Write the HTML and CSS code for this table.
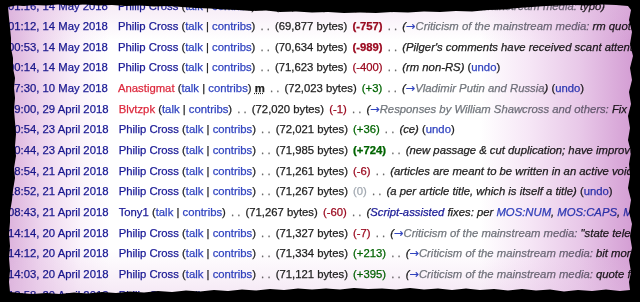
FILE: index.html
```html
<!DOCTYPE html>
<html>
<head>
  <title>Revision history</title>
  <link rel="stylesheet" href="styles.css">
</head>
<body>
  <div class="paper">
    <ul class="history">
      <li><a class="date">01:16, 14 May 2018</a> <span class="user"><a class="visited">Philip Cross</a> <span class="tools">(<a>talk</a> | <a>contribs</a>)</span></span> <span class="sep">. .</span> <span class="bytes">(69,870 bytes)</span> <span class="neg">(-7)</span> <span class="sep">. .</span> <span class="comment">(<span class="auto"><a class="arrow">→</a>Criticism of the mainstream media:</span> typo)</span></li>
      <li><a class="date">01:12, 14 May 2018</a> <span class="user"><a class="visited">Philip Cross</a> <span class="tools">(<a>talk</a> | <a>contribs</a>)</span></span> <span class="sep">. .</span> <span class="bytes">(69,877 bytes)</span> <span class="neg big">(-757)</span> <span class="sep">. .</span> <span class="comment">(<span class="auto"><a class="arrow">→</a>Criticism of the mainstream media:</span> rm quotes not about the media)</span></li>
      <li><a class="date">00:53, 14 May 2018</a> <span class="user"><a class="visited">Philip Cross</a> <span class="tools">(<a>talk</a> | <a>contribs</a>)</span></span> <span class="sep">. .</span> <span class="bytes">(70,634 bytes)</span> <span class="neg big">(-989)</span> <span class="sep">. .</span> <span class="comment">(Pilger's comments have received scant attention)</span></li>
      <li><a class="date">00:14, 14 May 2018</a> <span class="user"><a class="visited">Philip Cross</a> <span class="tools">(<a>talk</a> | <a>contribs</a>)</span></span> <span class="sep">. .</span> <span class="bytes">(71,623 bytes)</span> <span class="neg">(-400)</span> <span class="sep">. .</span> <span class="comment">(rm non-RS)</span> <span class="undo">(<a>undo</a>)</span></li>
      <li><a class="date">17:30, 10 May 2018</a> <span class="user"><a class="new">Anastigmat</a> <span class="tools">(<a>talk</a> | <a>contribs</a>)</span></span> <abbr class="minor">m</abbr> <span class="sep">. .</span> <span class="bytes">(72,023 bytes)</span> <span class="pos">(+3)</span> <span class="sep">. .</span> <span class="comment">(<span class="auto"><a class="arrow">→</a>Vladimir Putin and Russia</span>)</span> <span class="undo">(<a>undo</a>)</span></li>
      <li><a class="date">19:00, 29 April 2018</a> <span class="user"><a class="new">Blvtzpk</a> <span class="tools">(<a>talk</a> | <a>contribs</a>)</span></span> <span class="sep">. .</span> <span class="bytes">(72,020 bytes)</span> <span class="neg">(-1)</span> <span class="sep">. .</span> <span class="comment">(<span class="auto"><a class="arrow">→</a>Responses by William Shawcross and others:</span> Fix typo)</span></li>
      <li><a class="date">20:54, 23 April 2018</a> <span class="user"><a class="visited">Philip Cross</a> <span class="tools">(<a>talk</a> | <a>contribs</a>)</span></span> <span class="sep">. .</span> <span class="bytes">(72,021 bytes)</span> <span class="pos">(+36)</span> <span class="sep">. .</span> <span class="comment">(ce)</span> <span class="undo">(<a>undo</a>)</span></li>
      <li><a class="date">20:44, 23 April 2018</a> <span class="user"><a class="visited">Philip Cross</a> <span class="tools">(<a>talk</a> | <a>contribs</a>)</span></span> <span class="sep">. .</span> <span class="bytes">(71,985 bytes)</span> <span class="pos big">(+724)</span> <span class="sep">. .</span> <span class="comment">(new passage &amp; cut duplication; have improved the sourcing)</span></li>
      <li><a class="date">18:54, 21 April 2018</a> <span class="user"><a class="visited">Philip Cross</a> <span class="tools">(<a>talk</a> | <a>contribs</a>)</span></span> <span class="sep">. .</span> <span class="bytes">(71,261 bytes)</span> <span class="neg">(-6)</span> <span class="sep">. .</span> <span class="comment">(articles are meant to be written in an active voice)</span></li>
      <li><a class="date">18:52, 21 April 2018</a> <span class="user"><a class="visited">Philip Cross</a> <span class="tools">(<a>talk</a> | <a>contribs</a>)</span></span> <span class="sep">. .</span> <span class="bytes">(71,267 bytes)</span> <span class="zero">(0)</span> <span class="sep">. .</span> <span class="comment">(a per article title, which is itself a title)</span> <span class="undo">(<a>undo</a>)</span></li>
      <li><a class="date">08:43, 21 April 2018</a> <span class="user"><a class="visited">Tony1</a> <span class="tools">(<a>talk</a> | <a>contribs</a>)</span></span> <span class="sep">. .</span> <span class="bytes">(71,267 bytes)</span> <span class="neg">(-60)</span> <span class="sep">. .</span> <span class="comment">(<a class="visited">Script-assisted</a> fixes: per <a>MOS:NUM</a>, <a>MOS:CAPS</a>, <a>MOS:LINK</a>)</span></li>
      <li><a class="date">14:14, 20 April 2018</a> <span class="user"><a class="visited">Philip Cross</a> <span class="tools">(<a>talk</a> | <a>contribs</a>)</span></span> <span class="sep">. .</span> <span class="bytes">(71,327 bytes)</span> <span class="neg">(-7)</span> <span class="sep">. .</span> <span class="comment">(<span class="auto"><a class="arrow">→</a>Criticism of the mainstream media:</span> "state television")</span></li>
      <li><a class="date">14:12, 20 April 2018</a> <span class="user"><a class="visited">Philip Cross</a> <span class="tools">(<a>talk</a> | <a>contribs</a>)</span></span> <span class="sep">. .</span> <span class="bytes">(71,334 bytes)</span> <span class="pos">(+213)</span> <span class="sep">. .</span> <span class="comment">(<span class="auto"><a class="arrow">→</a>Criticism of the mainstream media:</span> bit more)</span></li>
      <li><a class="date">14:03, 20 April 2018</a> <span class="user"><a class="visited">Philip Cross</a> <span class="tools">(<a>talk</a> | <a>contribs</a>)</span></span> <span class="sep">. .</span> <span class="bytes">(71,121 bytes)</span> <span class="pos">(+395)</span> <span class="sep">. .</span> <span class="comment">(<span class="auto"><a class="arrow">→</a>Criticism of the mainstream media:</span> quote from the article)</span></li>
      <li><a class="date">13:58, 20 April 2018</a> <span class="user"><a class="visited">Philip Cross</a> <span class="tools">(<a>talk</a> | <a>contribs</a>)</span></span> <span class="sep">. .</span> <span class="bytes">(70,726 bytes)</span> <span class="pos">(+88)</span> <span class="sep">. .</span> <span class="comment">(ce)</span></li>
    </ul>
  </div>
</body>
</html>
```

FILE: styles.css
```css
body {
  margin: 0;
  background-color: #000000;
  font-family: "Liberation Sans", Arial, sans-serif;
}

/* torn sheet of paper */
.paper {
  position: relative;
  width: 640px;
  height: 302px;
  overflow: hidden;
  background-color: #FFFFFF;
  clip-path: polygon(
    8px 7px, 16px 5.5px, 24px 6px, 34px 5px, 46px 5.5px, 58px 4.5px, 70px 5.5px, 84px 4.5px,
    98px 5.5px, 112px 5px, 126px 6px, 140px 5.5px, 154px 6.5px, 168px 6px, 182px 7px,
    196px 8px, 210px 8.5px, 224px 9.5px, 238px 10px, 252px 11px, 266px 10.5px, 280px 12px,
    296px 11.5px, 312px 12.5px, 328px 12px, 344px 13px, 360px 12.5px, 376px 13px, 392px 12px,
    408px 12.5px, 424px 11.5px, 440px 12px, 456px 11px, 472px 11.5px, 488px 10px, 504px 9.5px,
    518px 8px, 532px 7px, 546px 6px, 560px 5.5px, 574px 5px, 588px 5.5px, 602px 4.5px,
    616px 5px, 628px 6px,
    631px 10px, 629px 20px, 632px 32px, 630px 44px, 633px 56px, 630px 68px, 632px 80px,
    629px 92px, 631px 104px, 628px 116px, 630px 128px, 628px 140px, 631px 152px, 629px 164px,
    630px 176px, 628px 188px, 631px 200px, 629px 212px, 632px 224px, 630px 236px, 632px 248px,
    629px 260px, 631px 272px, 629px 282px, 630px 290px,
    620px 291px, 606px 289.5px, 592px 291px, 578px 290px, 564px 291.5px, 550px 289.5px,
    536px 290.5px, 522px 289px, 508px 290.5px, 494px 289px, 480px 290px, 466px 288.5px,
    452px 290px, 438px 288.5px, 424px 289.5px, 410px 288px, 396px 289.5px, 382px 288.5px,
    368px 289px, 354px 288px, 340px 289.5px, 326px 288.5px, 312px 289.5px, 298px 288.5px,
    284px 290px, 270px 289px, 256px 290.5px, 242px 289.5px, 228px 291px, 214px 290px,
    200px 291.5px, 186px 290.5px, 172px 292px, 158px 291px, 144px 292.5px, 130px 291.5px,
    116px 293px, 102px 292px, 88px 293.5px, 74px 292.5px, 60px 294px, 46px 293px,
    32px 294px, 20px 293px, 10px 292px,
    9px 282px, 10px 270px, 9px 258px, 10px 246px, 9px 234px, 10px 222px, 10px 212px,
    12px 200px, 13px 190px, 15px 178px, 14px 168px, 16px 156px, 15px 146px, 16px 134px,
    15px 122px, 14px 110px, 15px 98px, 14px 88px, 15px 78px, 13px 68px, 13px 58px,
    11px 48px, 11px 38px, 10px 28px, 9px 18px
  );
}

/* purple glow towards the left and right edges */
.paper::after {
  content: "";
  position: absolute;
  top: 0;
  left: 0;
  right: 0;
  bottom: 0;
  background:
    linear-gradient(to bottom, rgba(226, 190, 226, 0.35) 0, rgba(255, 255, 255, 0) 40px, rgba(255, 255, 255, 0) 250px, rgba(226, 190, 226, 0.35) 295px),
    linear-gradient(to right, #DCB2DC 8px, #EDD4ED 40px, #FBF4FB 80px, #FFFFFF 110px, #FFFFFF 480px, #F6E6F6 530px, #E8C8E8 580px, #D49ED4 632px);
  mix-blend-mode: multiply;
  pointer-events: none;
}

.history {
  list-style: none;
  margin: -4.5px 0 0;
  padding: 0 0 0 8px;
  font-size: 11.3px;
  line-height: 20.67px;
  color: #222222;
  white-space: nowrap;
  -webkit-text-stroke: 0.25px currentColor;
}

.history li {
  height: 20.67px;
}

.history a {
  color: #3144C0;
  text-decoration: none;
}

.history a.date,
.history a.visited {
  color: #1A1A96;
}

.history a.new {
  color: #DD2B3F;
}

.history a.arrow {
  font-family: "DejaVu Sans", sans-serif;
  font-style: normal;
  line-height: 0;
}

.user {
  margin-left: 7px;
}

.sep {
  margin: 0 2px;
  color: #666666;
}

.neg,
.pos,
.zero {
  margin-left: 2px;
}

.minor {
  font-weight: bold;
  text-decoration: underline dotted;
}

.neg {
  color: #9B0A20;
}

.pos {
  color: #006400;
}

.zero {
  color: #A2A9B1;
}

.big {
  font-weight: bold;
}

.comment {
  font-style: italic;
}

.auto {
  color: #72777D;
}
```
